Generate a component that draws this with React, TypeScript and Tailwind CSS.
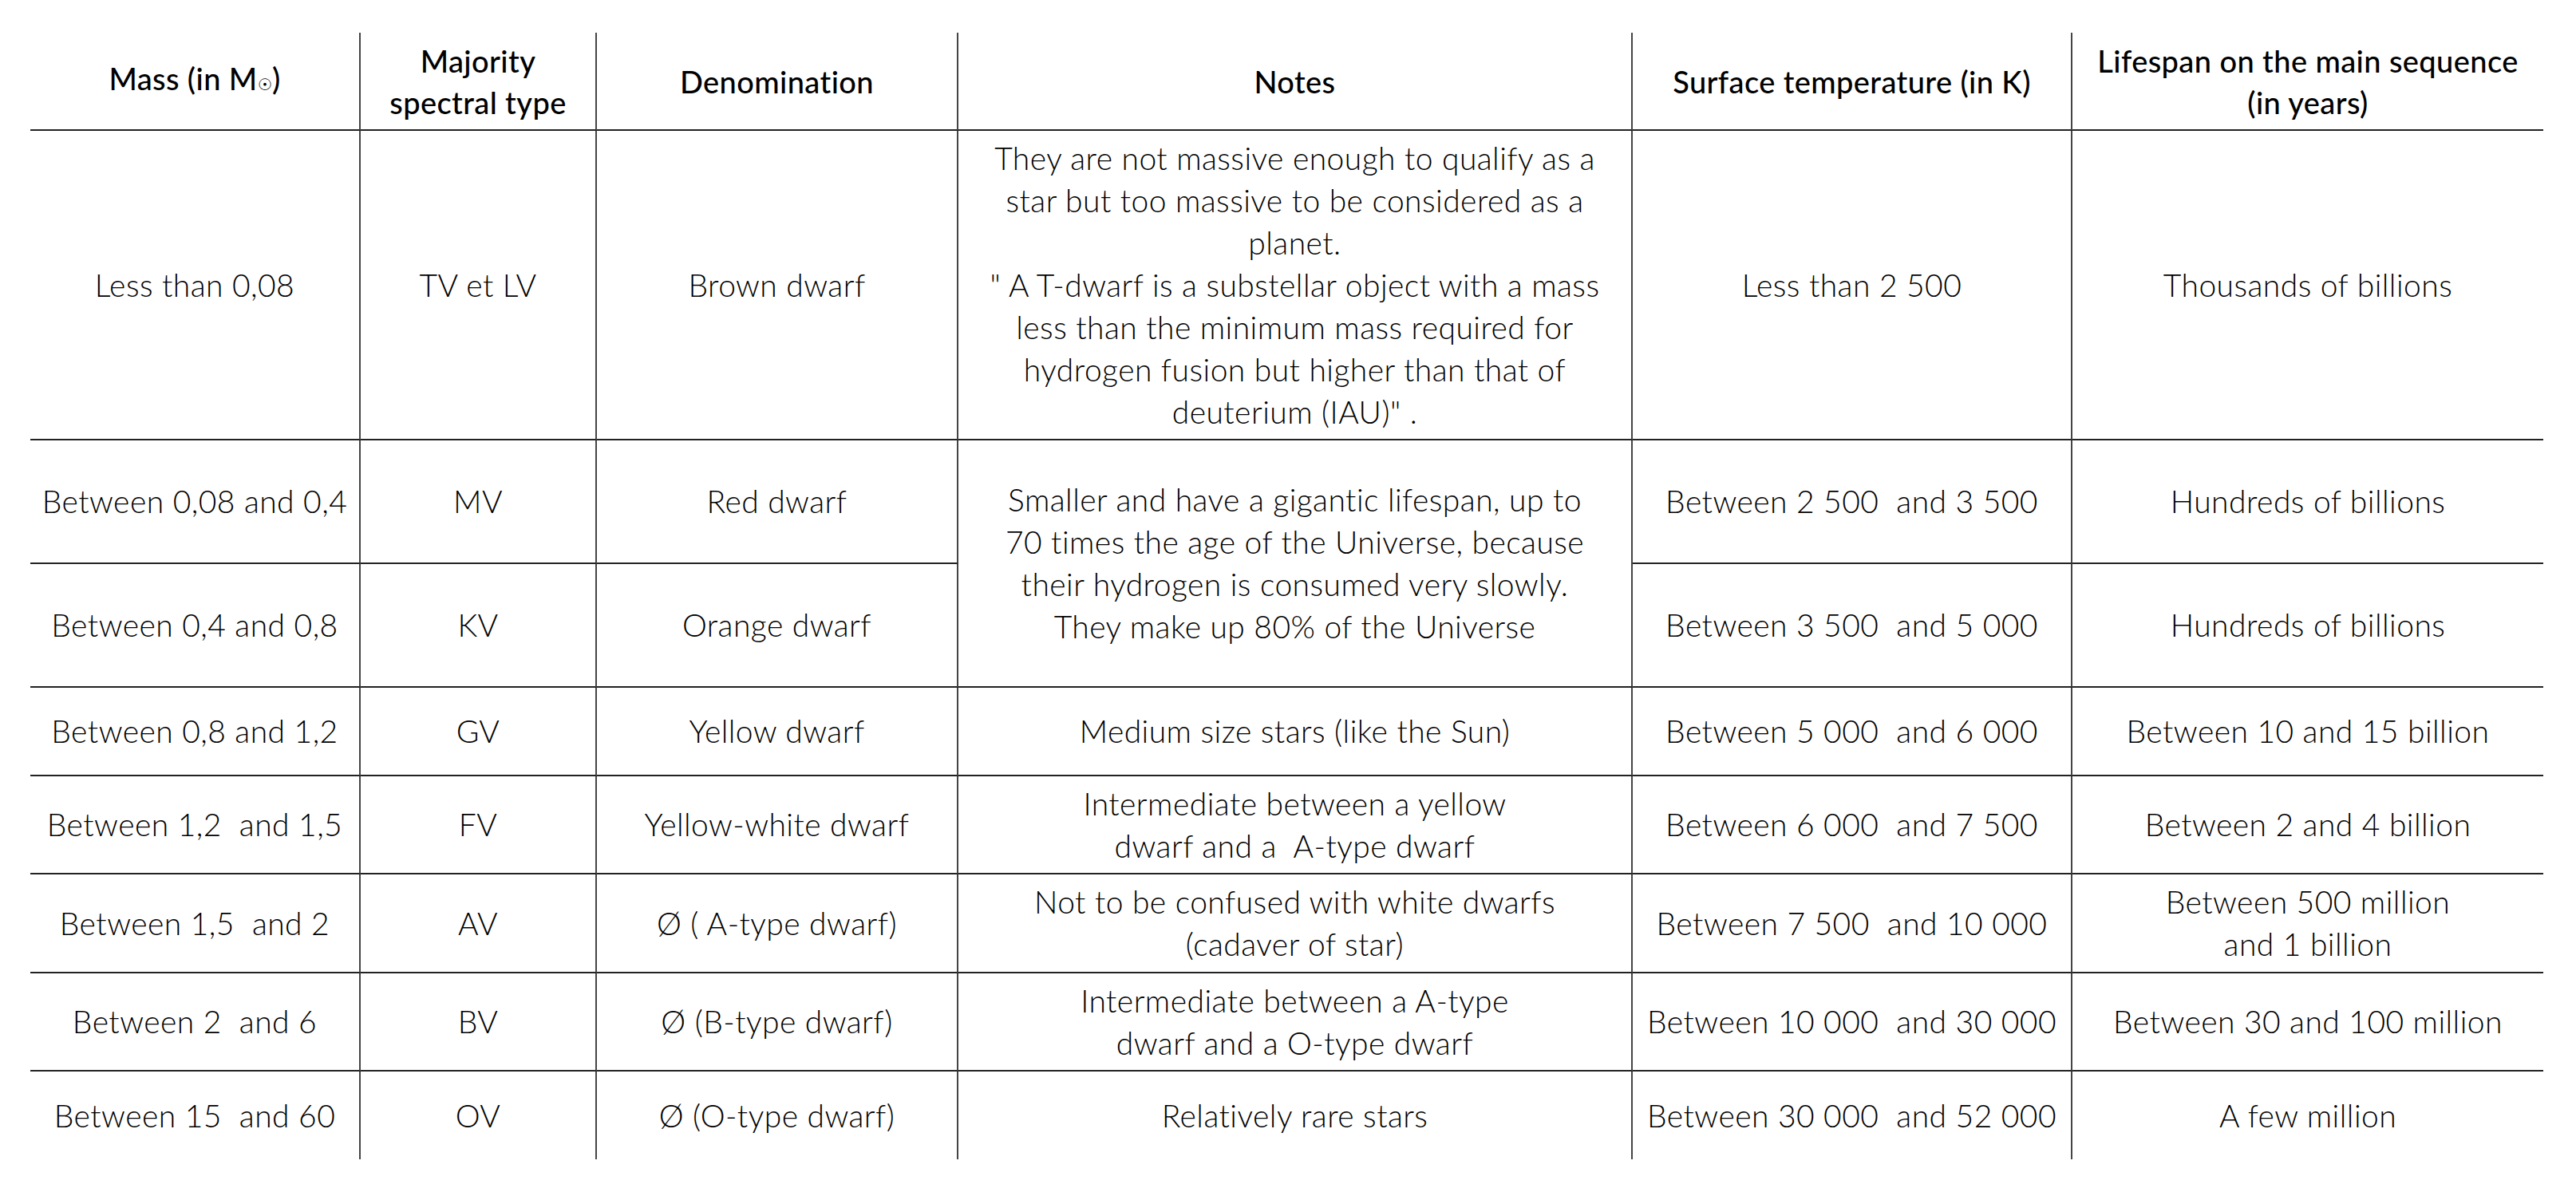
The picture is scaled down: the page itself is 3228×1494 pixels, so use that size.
import React from "react";

type CellProps = {
  lines: string[];
  col: number;
  last?: boolean;
  header?: boolean;
  span2?: boolean;
};

function Cell({ lines, col, last, header, span2 }: CellProps) {
  const cls = [
    "flex flex-col items-center justify-center text-center whitespace-pre",
    col < 6 ? "border-r-2 border-r-[#444]" : "",
    last ? "" : "border-b-2 border-b-[#222]",
    span2 ? "row-span-2" : "",
    header
      ? "font-medium text-[#000] text-[38px] tracking-[0.4px]"
      : "font-light text-[#000] text-[39px] tracking-[0.45px]",
  ].join(" ");
  return (
    <div className={cls}>
      {lines.map((l, i) => (
        <div key={i} className={header ? "leading-[52px]" : "leading-[53px]"}>
          {l}
        </div>
      ))}
    </div>
  );
}

function MassHeader() {
  return (
    <div className="flex flex-col items-center justify-center text-center whitespace-pre border-r-2 border-r-[#444] border-b-2 border-b-[#222] font-medium text-[#000] text-[38px] tracking-[0.4px]">
      <div className="leading-[52px]">
        Mass (in M
        <span className="font-['DejaVu_Sans',sans-serif] text-[20px] font-bold align-baseline">☉</span>)
      </div>
    </div>
  );
}

type Row = {
  cells: string[][];
  skipNotes?: boolean;
  notesSpan?: boolean;
};

const rows: Row[] = [
  {
    cells: [
      ["Less than 0,08"],
      ["TV et LV"],
      ["Brown dwarf"],
      [
        "They are not massive enough to qualify as a",
        "star but too massive to be considered as a",
        "planet.",
        "\" A T-dwarf is a substellar object with a mass",
        "less than the minimum mass required for",
        "hydrogen fusion but higher than that of",
        "deuterium (IAU)\" .",
      ],
      ["Less than 2 500"],
      ["Thousands of billions"],
    ],
  },
  {
    notesSpan: true,
    cells: [
      ["Between 0,08 and 0,4"],
      ["MV"],
      ["Red dwarf"],
      [
        "Smaller and have a gigantic lifespan, up to",
        "70 times the age of the Universe, because",
        "their hydrogen is consumed very slowly.",
        "They make up 80% of the Universe",
      ],
      ["Between 2 500  and 3 500"],
      ["Hundreds of billions"],
    ],
  },
  {
    skipNotes: true,
    cells: [
      ["Between 0,4 and 0,8"],
      ["KV"],
      ["Orange dwarf"],
      [],
      ["Between 3 500  and 5 000"],
      ["Hundreds of billions"],
    ],
  },
  {
    cells: [
      ["Between 0,8 and 1,2"],
      ["GV"],
      ["Yellow dwarf"],
      ["Medium size stars (like the Sun)"],
      ["Between 5 000  and 6 000"],
      ["Between 10 and 15 billion"],
    ],
  },
  {
    cells: [
      ["Between 1,2  and 1,5"],
      ["FV"],
      ["Yellow-white dwarf"],
      ["Intermediate between a yellow", "dwarf and a  A-type dwarf"],
      ["Between 6 000  and 7 500"],
      ["Between 2 and 4 billion"],
    ],
  },
  {
    cells: [
      ["Between 1,5  and 2"],
      ["AV"],
      ["Ø ( A-type dwarf)"],
      ["Not to be confused with white dwarfs", "(cadaver of star)"],
      ["Between 7 500  and 10 000"],
      ["Between 500 million", "and 1 billion"],
    ],
  },
  {
    cells: [
      ["Between 2  and 6"],
      ["BV"],
      ["Ø (B-type dwarf)"],
      ["Intermediate between a A-type", "dwarf and a O-type dwarf"],
      ["Between 10 000  and 30 000"],
      ["Between 30 and 100 million"],
    ],
  },
  {
    cells: [
      ["Between 15  and 60"],
      ["OV"],
      ["Ø (O-type dwarf)"],
      ["Relatively rare stars"],
      ["Between 30 000  and 52 000"],
      ["A few million"],
    ],
  },
];

export default function App() {
  return (
    <div className="min-h-[1494px] w-full bg-white pt-[41px] pl-[38px] font-['Lato','Noto_Sans',sans-serif]">
      <div className="grid w-[3149px] grid-cols-[414px_296px_453px_845px_551px_590px] grid-rows-[123px_388px_155px_155px_111px_123px_124px_123px_110px]">
        <MassHeader />
        <Cell header col={2} lines={["Majority", "spectral type"]} />
        <Cell header col={3} lines={["Denomination"]} />
        <Cell header col={4} lines={["Notes"]} />
        <Cell header col={5} lines={["Surface temperature (in K)"]} />
        <Cell header col={6} lines={["Lifespan on the main sequence", "(in years)"]} />
        {rows.map((r, ri) =>
          r.cells.map((c, ci) => {
            if (r.skipNotes && ci === 3) return null;
            const last = ri === rows.length - 1;
            return (
              <Cell
                key={`${ri}-${ci}`}
                col={ci + 1}
                lines={c}
                last={last}
                span2={r.notesSpan && ci === 3}
              />
            );
          })
        )}
      </div>
    </div>
  );
}
